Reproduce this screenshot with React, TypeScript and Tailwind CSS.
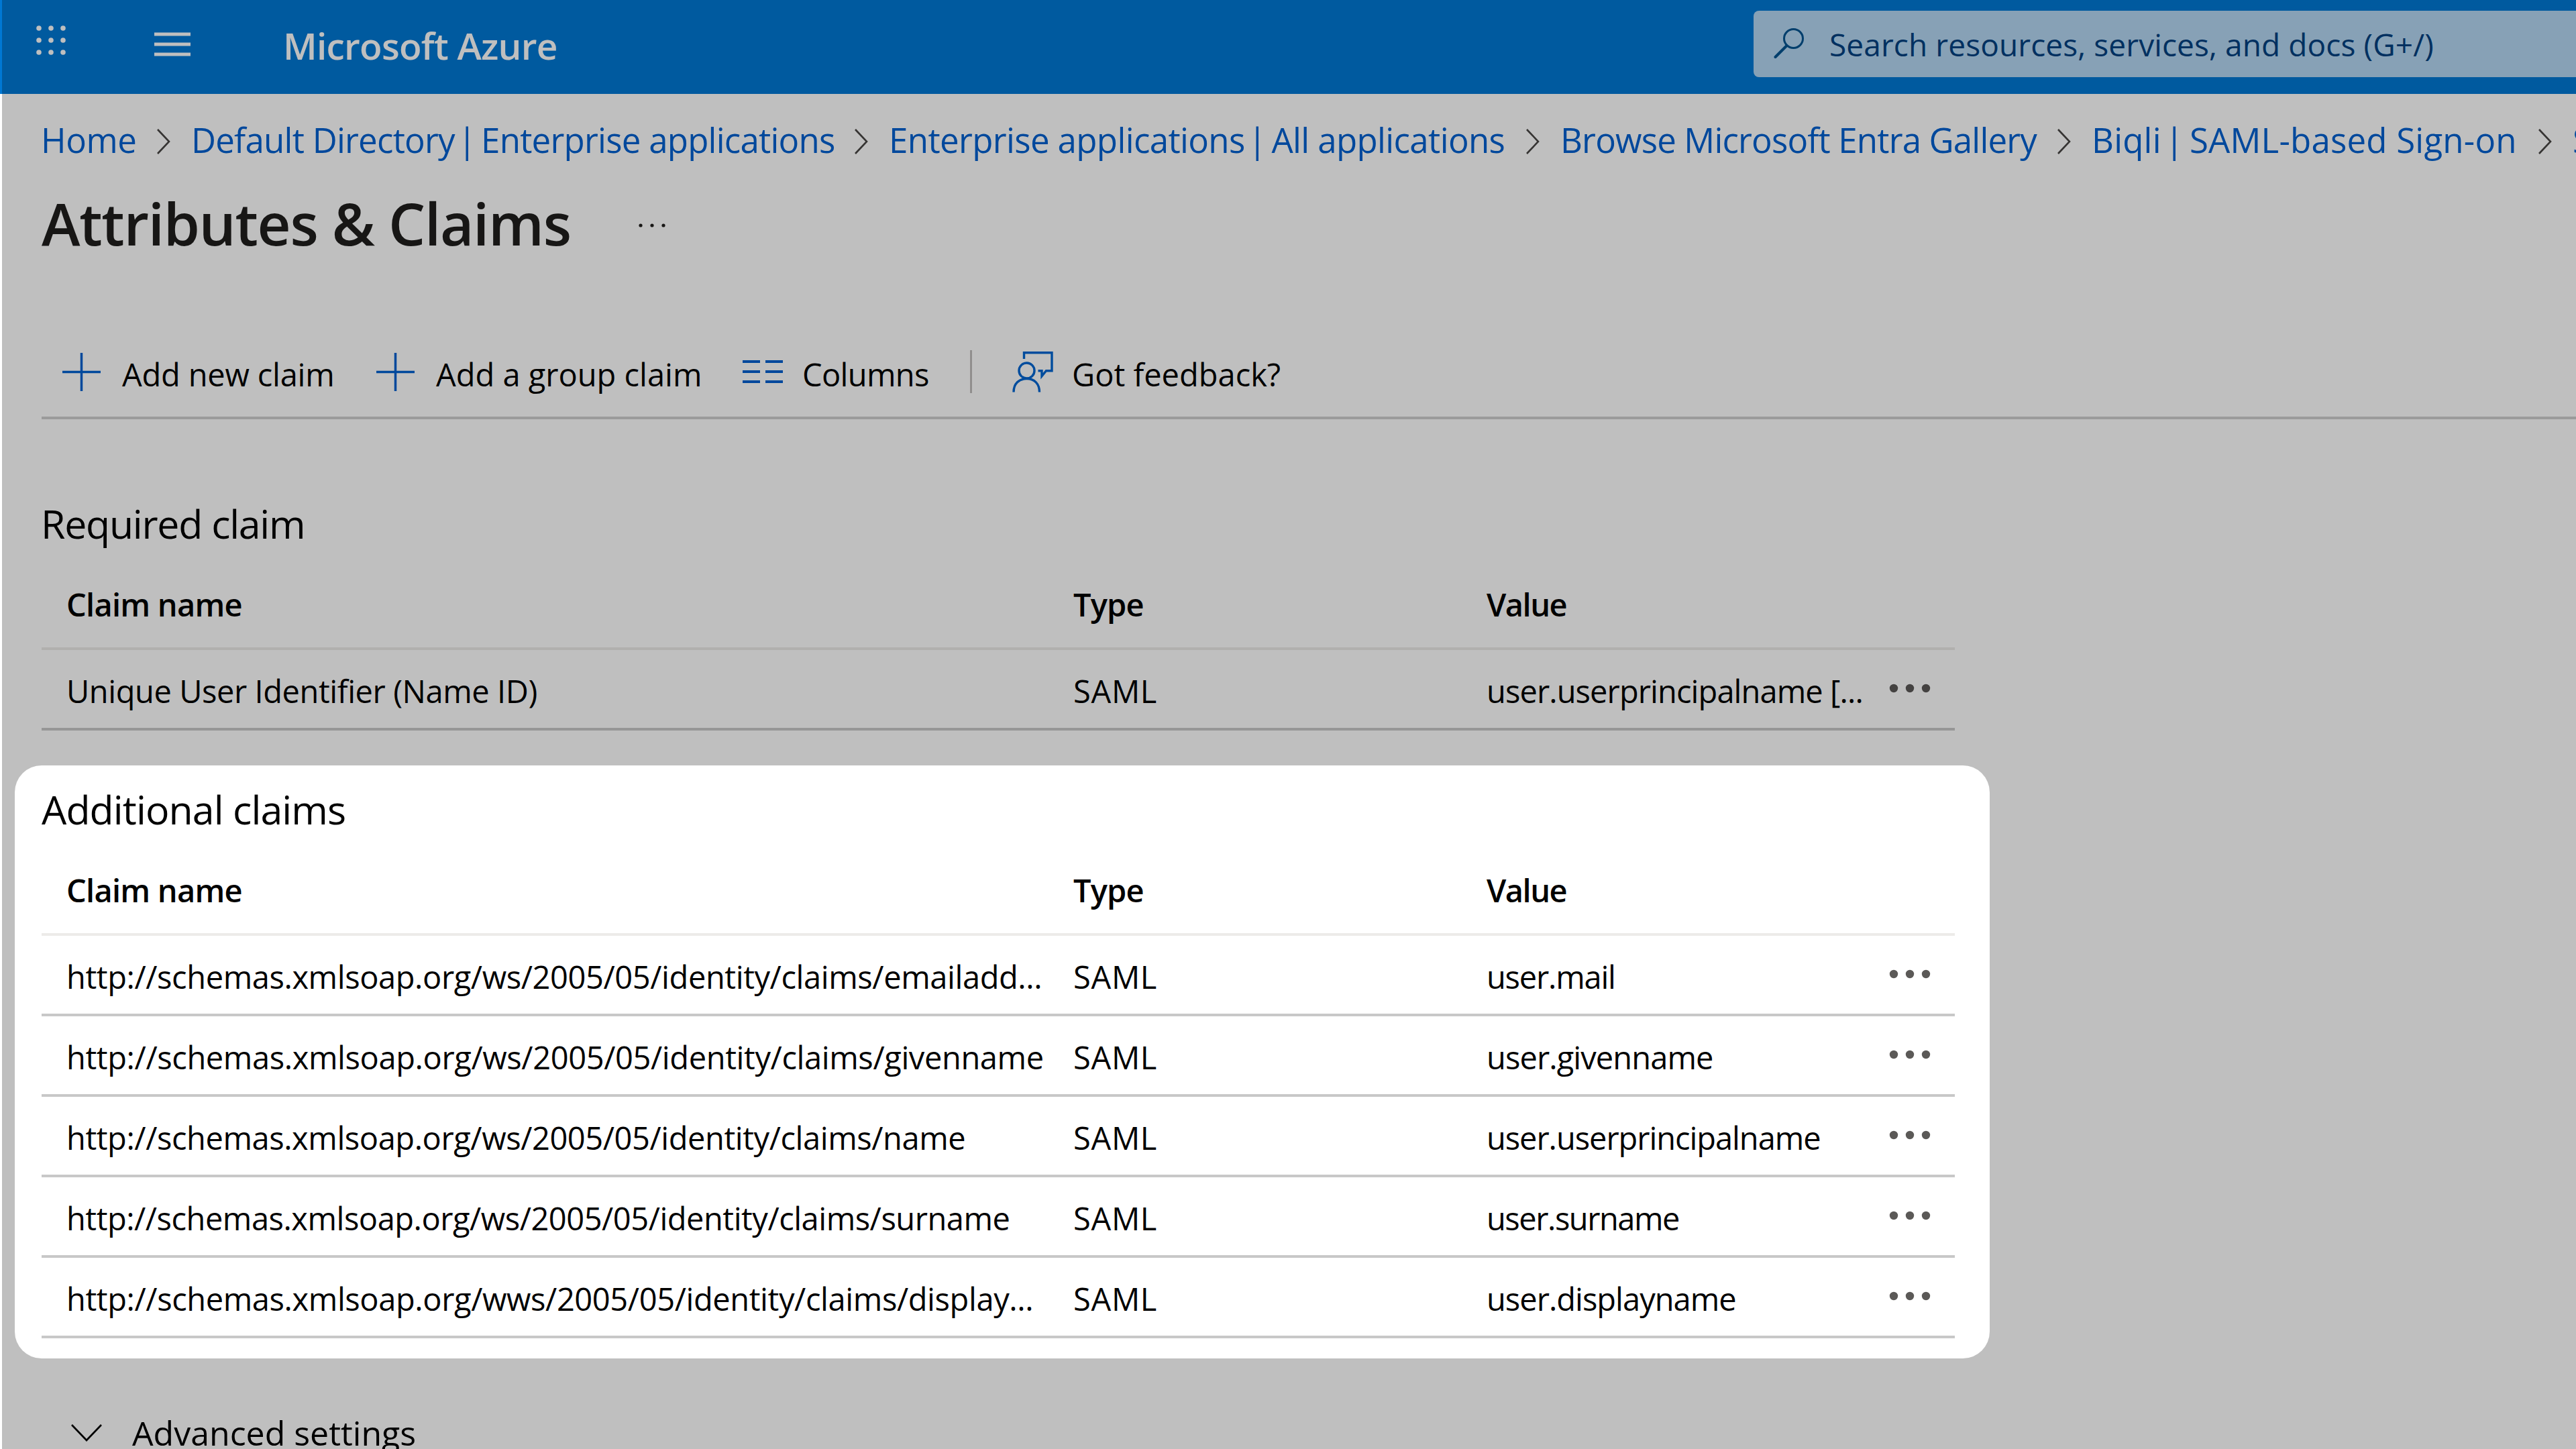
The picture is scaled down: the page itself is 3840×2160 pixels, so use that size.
import type { ReactNode } from "react";

type Claim = {
  name: string;
  value: string;
  nameClass: string;
  valueClass: string;
};

const breadcrumbs = [
  { label: ["Home"], className: "w-[224px] tracking-[-0.4px]" },
  {
    label: ["Default Directory", "Enterprise applications"],
    className: "w-[1040px] tracking-[-0.76px]",
  },
  {
    label: ["Enterprise applications", "All applications"],
    className: "w-[1001px] tracking-[-0.62px]",
  },
  {
    label: ["Browse Microsoft Entra Gallery"],
    className: "w-[792px] tracking-[-0.83px]",
  },
  {
    label: ["Biqli", "SAML-based Sign-on"],
    className: "w-[717px] tracking-[0.2px]",
  },
  { label: ["SAML-based Sign-on"], className: "w-[700px]" },
];

const requiredClaims: Claim[] = [
  {
    name: "Unique User Identifier (Name ID)",
    value: "user.userprincipalname [...",
    nameClass: "tracking-[-0.42px]",
    valueClass: "tracking-[-0.9px]",
  },
];

const additionalClaims: Claim[] = [
  {
    name: "http://schemas.xmlsoap.org/ws/2005/05/identity/claims/emailadd...",
    value: "user.mail",
    nameClass: "tracking-[-0.4px]",
    valueClass: "tracking-[-1.2px]",
  },
  {
    name: "http://schemas.xmlsoap.org/ws/2005/05/identity/claims/givenname",
    value: "user.givenname",
    nameClass: "tracking-[-0.38px]",
    valueClass: "tracking-[-0.9px]",
  },
  {
    name: "http://schemas.xmlsoap.org/ws/2005/05/identity/claims/name",
    value: "user.userprincipalname",
    nameClass: "tracking-[-0.42px]",
    valueClass: "tracking-[-1.05px]",
  },
  {
    name: "http://schemas.xmlsoap.org/ws/2005/05/identity/claims/surname",
    value: "user.surname",
    nameClass: "tracking-[-0.47px]",
    valueClass: "tracking-[-1.45px]",
  },
  {
    name: "http://schemas.xmlsoap.org/wws/2005/05/identity/claims/display...",
    value: "user.displayname",
    nameClass: "tracking-[-0.39px]",
    valueClass: "tracking-[-0.98px]",
  },
];

function WaffleIcon() {
  return (
    <svg width="48" height="48" viewBox="0 0 48 48" fill="#fff">
      {[6, 24, 42].map((y) =>
        [6, 24, 42].map((x) => <circle key={`${x}-${y}`} cx={x} cy={y} r="3.8" />)
      )}
    </svg>
  );
}

function MenuIcon() {
  return (
    <svg width="54" height="36" viewBox="0 0 54 36" fill="#fff">
      <path d="M0 0.5h54v5H0zM0 15.5h54v5H0zM0 30.5h54v5H0z" />
    </svg>
  );
}

function SearchIcon() {
  return (
    <svg width="48" height="48" viewBox="0 0 48 48" fill="none" stroke="#005391">
      <circle cx="29.5" cy="15.5" r="14" strokeWidth="3" />
      <path d="M19.5 26L2.5 43" strokeWidth="4" strokeLinecap="round" />
    </svg>
  );
}

function PlusIcon() {
  return (
    <svg width="57" height="57" viewBox="0 0 57 57" stroke="#0060d0" strokeWidth="3.5">
      <path d="M0 28.5h57M28.5 0v57" />
    </svg>
  );
}

function ColumnsIcon() {
  return (
    <svg width="60" height="34" viewBox="0 0 60 34" stroke="#0060d0" strokeWidth="4">
      <path d="M0 2h26M34 2h26M0 17h26M34 17h26M0 32h26M34 32h26" />
    </svg>
  );
}

function FeedbackIcon() {
  return (
    <svg width="62" height="62" viewBox="0 0 62 62" fill="none" stroke="#0066d2" strokeWidth="3.4">
      <path d="M17.5 12V2.8h41.5v27h-8.5l-6.5 8v-8h-5.5" />
      <circle cx="21.5" cy="29.5" r="11.5" />
      <path d="M2 61.5C2 49 10 41.5 21.5 41.5S40.5 49 40.5 61.5" />
    </svg>
  );
}

function ChevronRight() {
  return (
    <svg width="20" height="38" viewBox="0 0 20 38" fill="none" stroke="#484644" strokeWidth="2.6">
      <path d="M1 1l17 18L1 37" />
    </svg>
  );
}

function MoreDots() {
  return (
    <svg className="mb-[9px]" width="62" height="14" viewBox="0 0 62 14" fill="#5b5957">
      <circle cx="7" cy="7" r="6.2" />
      <circle cx="31" cy="7" r="6.2" />
      <circle cx="55" cy="7" r="6.2" />
    </svg>
  );
}

function ToolbarButton({ icon, children, className }: { icon: ReactNode; children: ReactNode; className: string }) {
  return (
    <button type="button" className={`flex h-full shrink-0 items-center whitespace-nowrap ${className}`}>
      <span className="mb-[4px] w-[89px] shrink-0">{icon}</span>
      <span className="mt-[3px]">{children}</span>
    </button>
  );
}

function ClaimsTable({ title, titleClass, claims }: { title: string; titleClass: string; claims: Claim[] }) {
  return (
    <section className="w-[2852px]">
      <h2 className={`text-[59px] leading-[138px] ${titleClass}`}>{title}</h2>
      <div className="grid h-[120px] grid-cols-[1501px_616px_600px_98px] items-center border-b-4 border-[#edebe9] pb-[13px] pl-[37px] font-semibold">
        <span className="tracking-[-0.75px]">Claim name</span>
        <span className="tracking-[-0.8px]">Type</span>
        <span className="tracking-[-1.5px]">Value</span>
      </div>
      {claims.map((claim) => (
        <div
          key={claim.name}
          className="grid h-[120px] grid-cols-[1501px_616px_600px_98px] items-center border-b-4 border-[#c8c8c8] pt-[6px] pl-[37px] whitespace-nowrap"
        >
          <span className={claim.nameClass}>{claim.name}</span>
          <span className="tracking-[0.7px]">SAML</span>
          <span className={claim.valueClass}>{claim.value}</span>
          <MoreDots />
        </div>
      ))}
    </section>
  );
}

export default function App() {
  return (
    <div className="relative h-[2160px] w-[3840px] overflow-hidden bg-white font-['Open_Sans','Noto_Sans',sans-serif] text-[47px] leading-[60px] text-black">
      <header className="flex h-[140px] items-center bg-[#0078d4]">
        <div className="mb-[20px] ml-[52px]">
          <WaffleIcon />
        </div>
        <div className="mb-[9px] ml-[130px]">
          <MenuIcon />
        </div>
        <span className="mb-[4px] ml-[138px] w-[2192px] text-[55px] font-semibold tracking-[-0.75px] text-white">
          Microsoft Azure
        </span>
        <div className="mb-[9px] flex h-[99px] flex-1 items-center rounded-l-[8px] bg-[#b4d7f3] pl-[30px] text-[46px] tracking-[0.1px] text-[#004080]">
          <SearchIcon />
          <span className="ml-[35px] whitespace-nowrap">Search resources, services, and docs (G+/)</span>
        </div>
      </header>

      <nav className="flex h-[135px] items-center pl-[61px] text-[51px] text-[#0060d0]">
        {breadcrumbs.map(({ label, className }, i) => (
          <div key={i} className={`flex shrink-0 items-center justify-between pr-[31px] whitespace-nowrap ${className}`}>
            <span>
              {label[0]}
              {label[1] && (
                <>
                  {" "}
                  <span className="mr-[-5px] ml-[-8px]">|</span> {label[1]}
                </>
              )}
            </span>
            <span className="mt-[6px]">
              <ChevronRight />
            </span>
          </div>
        ))}
      </nav>

      <div className="flex h-[114px] items-center pl-[62px]">
        <h1 className="w-[890px] text-[87px] font-semibold tracking-[-1.3px] text-[#1f1e1d]">Attributes &amp; Claims</h1>
        <svg className="mt-[8px]" width="40" height="6" viewBox="0 0 40 6" fill="#1f1e1d">
          <circle cx="3" cy="3" r="2.6" />
          <circle cx="20" cy="3" r="2.6" />
          <circle cx="37" cy="3" r="2.6" />
        </svg>
      </div>

      <div className="mt-[102px] ml-[62px] flex h-[134px] items-center border-b-4 border-[#cfcfcf] pl-[31px]">
        <ToolbarButton icon={<PlusIcon />} className="w-[468px] tracking-[-0.2px]">
          Add new claim
        </ToolbarButton>
        <ToolbarButton icon={<PlusIcon />} className="w-[546px]">
          Add a group claim
        </ToolbarButton>
        <ToolbarButton icon={<ColumnsIcon />} className="w-[339px] tracking-[-0.67px]">
          Columns
        </ToolbarButton>
        <div className="mr-[60px] mb-[4px] h-[64px] w-[3px] bg-[#c0bebc]" />
        <ToolbarButton icon={<FeedbackIcon />} className="w-[460px]">
          Got feedback?
        </ToolbarButton>
      </div>

      <main className="mt-[86px] ml-[62px] flex flex-col">
        <ClaimsTable title="Required claim" titleClass="-ml-px tracking-[-1.25px]" claims={requiredClaims} />
        <div className="h-[48px]" />
        <ClaimsTable title="Additional claims" titleClass="tracking-[-0.9px]" claims={additionalClaims} />
        <div className="mt-[111px] flex h-[60px] items-center pl-[44px] text-[50px]">
          <svg width="46" height="26" viewBox="0 0 46 26" fill="none" stroke="#000" strokeWidth="2.6">
            <path d="M1 1l22 23L45 1" />
          </svg>
          <span className="ml-[45px]">Advanced settings</span>
        </div>
      </main>

      {/* backdrop with the additional claims panel left uncovered */}
      <div className="pointer-events-none absolute inset-y-0 right-0 left-[3px] overflow-hidden">
        <div className="absolute top-[1141px] left-[19px] h-[884px] w-[2944px] rounded-[40px] shadow-[0_0_0_4000px_rgba(0,0,0,0.25)]" />
      </div>
    </div>
  );
}
